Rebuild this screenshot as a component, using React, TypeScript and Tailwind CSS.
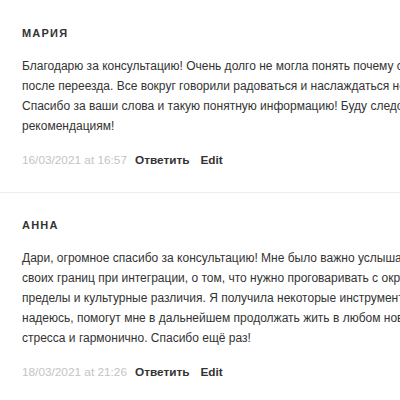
const comments = [
  {
    name: "Мария",
    lines: [
      "Благодарю за консультацию! Очень долго не могла понять почему со мной это происходит",
      "после переезда. Все вокруг говорили радоваться и наслаждаться новой жизнью.",
      "Спасибо за ваши слова и такую понятную информацию! Буду следовать вашим",
      "рекомендациям!",
    ],
    date: "16/03/2021 at 16:57",
  },
  {
    name: "Анна",
    lines: [
      "Дари, огромное спасибо за консультацию! Мне было важно услышать про важность",
      "своих границ при интеграции, о том, что нужно проговаривать с окружающими свои",
      "пределы и культурные различия. Я получила некоторые инструменты, которые, я",
      "надеюсь, помогут мне в дальнейшем продолжать жить в любом новом месте без",
      "стресса и гармонично. Спасибо ещё раз!",
    ],
    date: "18/03/2021 at 21:26",
  },
];

export default function App() {
  return (
    <div className="w-[400px] h-[400px] overflow-hidden bg-white font-['Liberation_Sans',Arial,sans-serif] text-[#333]">
      {comments.map((c, i) => (
        <div
          key={c.name}
          className={`px-[22px] pb-6 ${i === 0 ? "pt-[25px] border-b border-[#ececec]" : "pt-6"}`}
        >
          <div className="text-[11px] leading-4 font-bold uppercase tracking-[0.11em] text-[#333]">
            {c.name}
          </div>
          <p className="mt-[15px] w-[700px] text-[12px] leading-5 text-[#333] whitespace-nowrap">
            {c.lines.map((l, j) => (
              <span key={j} className="block">
                {l}
              </span>
            ))}
          </p>
          <div className="mt-4 flex items-center gap-[8px] text-[11.8px] leading-4">
            <span className="text-[#c4c4c4]">{c.date}</span>
            <span className="font-bold text-[#333]">Ответить</span>
            <span className="ml-[3px] font-bold text-[#333]">Edit</span>
          </div>
        </div>
      ))}
    </div>
  );
}
